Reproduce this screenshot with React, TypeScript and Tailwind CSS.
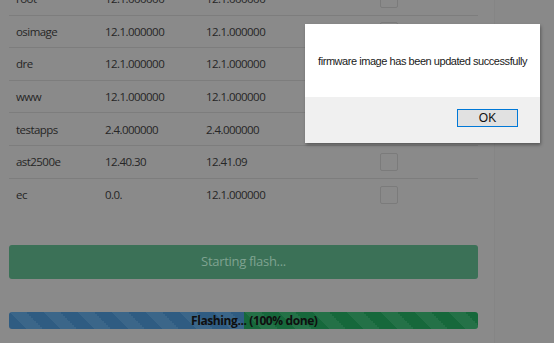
import React from "react";

const rows = [
  { name: "root", cur: "12.1.000000", next: "12.1.000000" },
  { name: "osimage", cur: "12.1.000000", next: "12.1.000000" },
  { name: "dre", cur: "12.1.000000", next: "12.1.000000" },
  { name: "www", cur: "12.1.000000", next: "12.1.000000" },
  { name: "testapps", cur: "2.4.000000", next: "2.4.000000" },
  { name: "ast2500e", cur: "12.40.30", next: "12.41.09" },
  { name: "ec", cur: "0.0.", next: "12.1.000000" },
];

export default function App() {
  return (
    <div className="relative w-[554px] h-[343px] overflow-hidden bg-[#8a8a8a] flex">
      <div className="w-[494px] h-full pl-[9px] pr-[16px] flex flex-col">
        <div className="mt-[-17px] flex flex-col" style={{ fontFamily: '"Open Sans", sans-serif' }}>
          {rows.map((r, i) => (
            <div
              key={r.name}
              className={`flex items-center h-[32.6px] text-[11.5px] tracking-[-0.55px] text-[#262626] ${i < rows.length - 1 ? "border-b border-[#7d7d7d]" : ""}`}
            >
              <div className="w-[96px] pl-[7px]">{r.name}</div>
              <div className="w-[101px]">{r.cur}</div>
              <div className="w-[174px]">{r.next}</div>
              <div className="w-[18px] h-[18px] border-[1.5px] border-[#7b7b7b] rounded-[2px]" />
            </div>
          ))}
        </div>
        <div
          className="mt-[34px] h-[34px] rounded-[3px] bg-[#3b7157] flex items-center justify-center text-[13px] text-[#7fa391] tracking-[-0.3px]"
          style={{ fontFamily: '"Open Sans", sans-serif' }}
        >
          Starting flash...
        </div>
        <div className="relative mt-[33px] h-[17px] rounded-[3px] overflow-hidden flex">
          <div className="w-1/2 h-full bg-[#2f5c82] bg-[linear-gradient(45deg,rgba(255,255,255,.06)_25%,transparent_25%,transparent_50%,rgba(255,255,255,.06)_50%,rgba(255,255,255,.06)_75%,transparent_75%,transparent)] bg-[length:34px_34px]" />
          <div className="w-1/2 h-full bg-[#16683b] bg-[linear-gradient(45deg,rgba(255,255,255,.06)_25%,transparent_25%,transparent_50%,rgba(255,255,255,.06)_50%,rgba(255,255,255,.06)_75%,transparent_75%,transparent)] bg-[length:34px_34px]" />
          <div
            className="absolute left-[182px] top-0 h-full flex items-center text-[12px] font-bold text-[#0f0f0f] tracking-[-0.4px]"
            style={{ fontFamily: '"Open Sans", sans-serif' }}
          >
            Flashing... (100% done)
          </div>
        </div>
      </div>
      <div className="flex-1 h-full border-l border-[#858585] bg-[#898989]" />

      <div className="absolute left-[305px] top-[24px] w-[235px] h-[119px] flex flex-col shadow-[1px_2px_3px_rgba(0,0,0,0.35)]" style={{ fontFamily: '"Liberation Sans", Arial, sans-serif' }}>
        <div className="h-[73px] pt-[2px] bg-white flex items-center justify-center text-[11px] tracking-[-0.45px] text-[#1a1a1a]">
          firmware image has been updated successfully
        </div>
        <div className="flex-1 bg-[#f0f0f0] flex items-start justify-end pt-[12px] pr-[22px]">
          <div className="w-[61px] h-[18px] bg-[#e1e1e1] border border-[#0078d7] flex items-center justify-center text-[12px] text-[#111]">
            OK
          </div>
        </div>
      </div>
    </div>
  );
}
